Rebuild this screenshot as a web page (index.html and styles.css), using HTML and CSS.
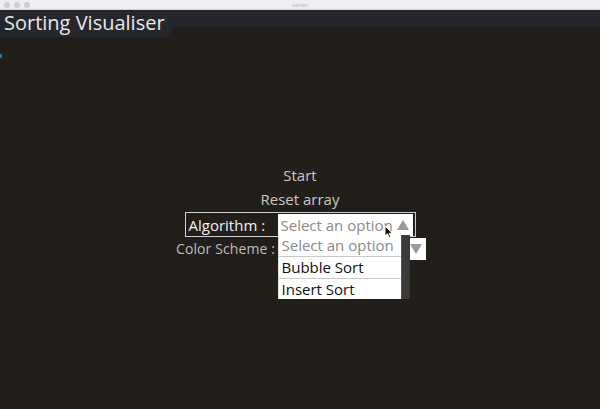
FILE: index.html
```html
<!DOCTYPE html>
<html>
<head>
<meta charset="utf-8">
<link rel="stylesheet" href="styles.css">
</head>
<body>
<div class="window">
  <div class="titlebar">
    <div class="lights"><span class="light"></span><span class="light"></span><span class="light"></span></div>
    <div class="wintitle">sorter</div>
  </div>
  <div class="header">
    <div class="tab">Sorting Visualiser</div>
    <div class="band"></div>
  </div>
  <div class="marker"></div>
  <main class="main">
    <div class="btn">Start</div>
    <div class="btn">Reset array</div>
    <div class="row algo">
      <span class="label">Algorithm :</span>
      <div class="select open">
        <span class="placeholder">Select an option</span>
        <span class="tri up"></span>
        <svg class="cursor" width="10" height="14" viewBox="0 0 10 14"><path d="M1 1 L1 11 L3.5 8.8 L5.3 12.8 L6.9 12.1 L5.2 8.3 L8.5 8.3 Z" fill="#111" stroke="#fff" stroke-width="1"/></svg>
        <div class="dropdown">
          <div class="list">
            <div class="opt ph">Select an option</div>
            <div class="opt">Bubble Sort</div>
            <div class="opt">Insert Sort</div>
          </div>
          <div class="scroll"></div>
        </div>
      </div>
    </div>
    <div class="row color">
      <span class="label dim">Color Scheme :</span>
      <div class="select">
        <span class="tri down"></span>
      </div>
    </div>
  </main>
</div>
</body>
</html>
```

FILE: styles.css
```css
* { box-sizing: border-box; }
html, body { margin: 0; padding: 0; }
body {
  width: 600px;
  height: 409px;
  overflow: hidden;
  background: #221f1b;
  font-family: "Open Sans", "Noto Sans", sans-serif;
}
.window { width: 600px; height: 409px; display: flex; flex-direction: column; }
.titlebar {
  height: 10px;
  background: #efeef1;
  position: relative;
  display: flex;
  align-items: center;
  justify-content: center;
  border-bottom: 1px solid #d6d5d8;
}
.lights { position: absolute; left: 4px; top: 2px; display: flex; gap: 4px; }
.light { width: 6px; height: 6px; border-radius: 50%; background: #cfced2; }
.wintitle { font-size: 6px; color: #b5b5b8; line-height: 10px; }
.header { display: flex; align-items: flex-start; height: 27px; }
.tab {
  width: 176px;
  height: 27px;
  background: #25272c;
  color: #e9e9ea;
  font-size: 20px;
  line-height: 26px;
  padding-left: 4px;
  white-space: nowrap;
  clip-path: polygon(0 0, 100% 0, 100% 15px, 95% 100%, 0 100%);
}
.band { flex: 1; height: 17px; background: #25272c; }
.marker { position: absolute; left: 0; top: 54px; width: 2px; height: 4px; background: #2a6fb0; }
.main {
  flex: 1;
  display: flex;
  flex-direction: column;
  align-items: center;
  padding-top: 126px;
}
.btn { color: #c8c8c8; font-size: 15px; line-height: 24px; height: 24px; }
.row { display: flex; }
.algo {
  border: 1px solid #cfcfcf;
  height: 25px;
  padding: 1px 2px 0 3px;
  align-items: flex-start;
  margin-top: 1px;
}
.algo .label { width: 89px; line-height: 22px; }
.color { height: 24px; align-items: center; width: 250px; margin-left: 2px; }
.color .label { width: 115px; font-size: 14px; letter-spacing: 0.1px; }
.label { color: #f2f2f2; font-size: 15px; line-height: 20px; white-space: nowrap; }
.label.dim { color: #bdbdbd; }
.select {
  position: relative;
  width: 135px;
  height: 22px;
  background: #ffffff;
  display: flex;
  align-items: center;
  padding-left: 3px;
}
.placeholder { color: #8a8a8a; font-size: 15px; line-height: 20px; white-space: nowrap; }
.tri { position: absolute; right: 4px; width: 0; height: 0; border-left: 6px solid transparent; border-right: 6px solid transparent; }
.tri.up { border-bottom: 10px solid #9a9a9a; top: 6px; }
.tri.down { border-top: 10px solid #9a9a9a; top: 6px; }
.cursor { position: absolute; left: 106px; top: 11px; z-index: 3; }
.dropdown {
  position: absolute;
  left: 0;
  top: 21px;
  display: flex;
  z-index: 2;
}
.list { width: 123px; background: #fff; border-left: 1px solid #e0e0e0; }
.opt {
  height: 22px;
  padding-left: 3px;
  font-size: 15px;
  line-height: 21px;
  color: #111;
  border-bottom: 1px solid #c8c8c8;
  white-space: nowrap;
}
.opt:last-child { border-bottom: none; height: 20px; }
.opt.ph { color: #8a8a8a; }
.scroll { width: 9px; background: #3a3a3a; border-left: 1px solid #555; }
```
